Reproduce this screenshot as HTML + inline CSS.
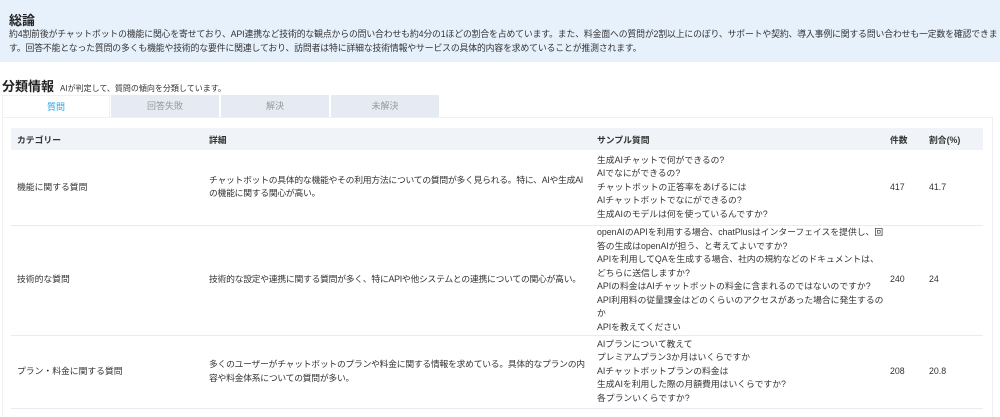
<!DOCTYPE html>
<html><head><meta charset="utf-8"><style>
*{margin:0;padding:0;box-sizing:border-box}
body{width:1000px;height:417px;overflow:hidden;background:#fff;font-family:"Liberation Sans","Noto Sans CJK JP",sans-serif;color:#333}
.sum{position:absolute;left:0;top:0;width:1000px;height:62px;background:#e6f1fc}
.sum h1{position:absolute;left:9px;top:10px;font-size:13px;font-weight:bold;color:#222}
.sum p{position:absolute;left:9px;top:27px;width:995px;font-size:8.85px;line-height:14px;color:#333;letter-spacing:-0.14px;white-space:nowrap}
.h2{position:absolute;left:2px;top:76px;font-size:13px;font-weight:bold;color:#222}
.h2 small{font-size:8px;font-weight:normal;margin-left:6px;color:#333}
.tab{position:absolute;top:95px;width:108px;height:22px;background:#e6eaf2;color:#999;font-size:9px;text-align:center;line-height:22px}
.tab.a{background:#fff;color:#29a3e0;border:1px solid #eef0f4;border-bottom:none}
.panel{position:absolute;left:2px;top:117px;width:991px;height:300px;border:1px solid #eef0f4;border-bottom:none}
table{position:absolute;left:11px;top:128px;width:972px;border-collapse:collapse;font-size:8.8px;color:#333}
th{background:#f0f3f8;text-align:left;font-weight:bold;height:22px;padding:0 0 0 6px}
td{padding:0 0 0 6px;border-bottom:1px solid #e8ecf2;line-height:13.5px;vertical-align:middle}
td.d{letter-spacing:-0.25px;padding-right:4px}
</style></head><body>
<div class="sum"><h1>総論</h1><p>約4割前後がチャットボットの機能に関心を寄せており、API連携など技術的な観点からの問い合わせも約4分の1ほどの割合を占めています。また、料金面への質問が2割以上にのぼり、サポートや契約、導入事例に関する問い合わせも一定数を確認できま<br>す。回答不能となった質問の多くも機能や技術的な要件に関連しており、訪問者は特に詳細な技術情報やサービスの具体的内容を求めていることが推測されます。</p></div>
<div class="h2">分類情報<small>AIが判定して、質問の傾向を分類しています。</small></div>
<div class="panel"></div>
<div class="tab a" style="left:2px">質問</div>
<div class="tab" style="left:111px">回答失敗</div>
<div class="tab" style="left:221px">解決</div>
<div class="tab" style="left:331px">未解決</div>
<table>
<tr><th style="width:192px">カテゴリー</th><th style="width:388px">詳細</th><th style="width:293px">サンプル質問</th><th style="width:39px">件数</th><th>割合(%)</th></tr>
<tr style="height:75px"><td>機能に関する質問</td><td class="d">チャットボットの具体的な機能やその利用方法についての質問が多く見られる。特に、AIや生成AIの機能に関する関心が高い。</td><td>生成AIチャットで何ができるの?<br>AIでなにができるの?<br>チャットボットの正答率をあげるには<br>AIチャットボットでなにができるの?<br>生成AIのモデルは何を使っているんですか?</td><td>417</td><td>41.7</td></tr>
<tr style="height:110px"><td>技術的な質問</td><td class="d">技術的な設定や連携に関する質問が多く、特にAPIや他システムとの連携についての関心が高い。</td><td>openAIのAPIを利用する場合、chatPlusはインターフェイスを提供し、回答の生成はopenAIが担う、と考えてよいですか?<br>APIを利用してQAを生成する場合、社内の規約などのドキュメントは、どちらに送信しますか?<br>APIの料金はAIチャットボットの料金に含まれるのではないのですか?<br>API利用料の従量課金はどのくらいのアクセスがあった場合に発生するのか<br>APIを教えてください</td><td>240</td><td>24</td></tr>
<tr style="height:73px"><td>プラン・料金に関する質問</td><td class="d">多くのユーザーがチャットボットのプランや料金に関する情報を求めている。具体的なプランの内容や料金体系についての質問が多い。</td><td>AIプランについて教えて<br>プレミアムプラン3か月はいくらですか<br>AIチャットボットプランの料金は<br>生成AIを利用した際の月額費用はいくらですか?<br>各プランいくらですか?</td><td>208</td><td>20.8</td></tr>
</table>
</body></html>
